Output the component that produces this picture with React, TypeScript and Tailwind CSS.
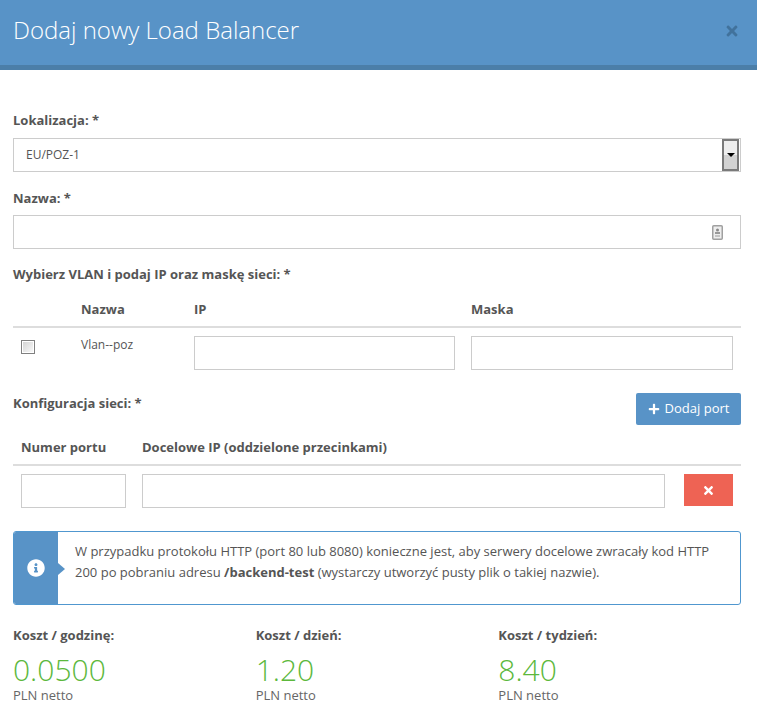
import { FaInfoCircle, FaPlus, FaTimes } from "react-icons/fa";

const font = { fontFamily: '"Open Sans", sans-serif' };

const inputClass = "h-[34px] border border-[#cccccc] bg-white";

const Label = ({ children }: { children: React.ReactNode }) => (
  <div className="text-[13px] leading-[18px] font-bold text-[#555555]">{children}</div>
);

const Cost = ({ label, value }: { label: string; value: string }) => (
  <div className="w-[243px]">
    <Label>{label}</Label>
    <div className="mt-[11px] text-[30px] leading-[30px] font-light text-[#5cb83c]">{value}</div>
    <div className="mt-[2px] text-[13px] leading-[16px] text-[#666666]">PLN netto</div>
  </div>
);

export default function App() {
  return (
    <div className="h-[715px] w-[757px] overflow-hidden bg-white" style={font}>
      <div className="flex h-[70px] items-center justify-between border-b-[5px] border-[#4b7ea8] bg-[#5893c7] pr-[18px] pb-[5px] pl-[13px]">
        <h1 className="text-[24px] font-light text-white">Dodaj nowy Load Balancer</h1>
        <FaTimes className="mt-[2px] h-[16px] w-[14px] text-[#41729c]" />
      </div>

      <div className="px-[13px] pt-[41px]">
        <Label>Lokalizacja: *</Label>
        <div className={`${inputClass} mt-[9px] flex w-[728px] items-center justify-between pr-[1px] pl-[12px]`}>
          <span className="text-[12px] text-[#555555]">EU/POZ-1</span>
          <div className="flex h-[32px] w-[17px] items-center justify-center border-2 border-[#7a7a7a] bg-[linear-gradient(#eeeeee_50%,#d2d2d2_50%)]">
            <div className="h-0 w-0 border-x-[4px] border-t-[4px] border-x-transparent border-t-black" />
          </div>
        </div>

        <div className="mt-[17px]">
          <Label>Nazwa: *</Label>
        </div>
        <div className={`${inputClass} mt-[8px] flex w-[728px] items-center justify-end pr-[17px]`}>
          <svg width="11" height="15" viewBox="0 0 11 15">
            <rect x="0.75" y="0.75" width="9.5" height="13.5" rx="1" fill="#eeeeee" stroke="#a0a0a0" strokeWidth="1.5" />
            <circle cx="5.5" cy="5" r="1.5" fill="#888888" />
            <rect x="3" y="7" width="5" height="2" fill="#999999" />
            <rect x="3" y="10" width="5" height="2" fill="#c4c4c4" />
          </svg>
        </div>

        <div className="mt-[16px]">
          <Label>Wybierz VLAN i podaj IP oraz maskę sieci: *</Label>
        </div>
        <div className="mt-[17px] flex h-[28px] w-[728px] border-b-2 border-[#dddddd]">
          <div className="w-[68px]" />
          <div className="w-[113px]">
            <Label>Nazwa</Label>
          </div>
          <div className="w-[277px]">
            <Label>IP</Label>
          </div>
          <Label>Maska</Label>
        </div>
        <div className="flex w-[728px] pt-[8px]">
          <div className="w-[68px] pt-[4px] pl-[8px]">
            <div className="h-[14px] w-[14px] border border-[#808080] bg-white p-[1px]">
              <div className="h-full w-full bg-gradient-to-br from-[#d4d4d4] to-[#f8f8f8]" />
            </div>
          </div>
          <div className="w-[113px] text-[12px] leading-[18px] text-[#555555]">Vlan--poz</div>
          <div className={`${inputClass} w-[261px]`} />
          <div className="w-[16px]" />
          <div className={`${inputClass} w-[262px]`} />
        </div>

        <div className="mt-[23px] flex w-[728px] items-start justify-between">
          <div className="pt-[1px]">
            <Label>Konfiguracja sieci: *</Label>
          </div>
          <button className="flex h-[32px] w-[105px] items-center justify-center gap-[5px] rounded-[2px] bg-[#5893c7] text-[13px] text-white">
            <FaPlus className="h-[12px] w-[12px]" />
            Dodaj port
          </button>
        </div>

        <div className="mt-[13px] flex h-[28px] w-[728px] border-b-2 border-[#dddddd]">
          <div className="w-[129px] pl-[8px]">
            <Label>Numer portu</Label>
          </div>
          <Label>Docelowe IP (oddzielone przecinkami)</Label>
        </div>
        <div className="flex w-[728px] pt-[8px]">
          <div className="w-[8px]" />
          <div className={`${inputClass} w-[105px]`} />
          <div className="w-[16px]" />
          <div className={`${inputClass} w-[523px]`} />
          <div className="w-[19px]" />
          <div className="flex h-[32px] w-[49px] items-center justify-center bg-[#ee6354]">
            <FaTimes className="h-[13px] w-[11px] text-white" />
          </div>
        </div>

        <div className="mt-[23px] flex h-[74px] w-[728px] rounded-[3px] border border-[#5097cf]">
          <div className="relative flex w-[44px] items-center justify-center rounded-l-[2px] bg-[#5893c7]">
            <FaInfoCircle className="h-[18px] w-[18px] text-white" />
            <div className="absolute top-[31px] -right-[7px] h-0 w-0 border-y-[6px] border-l-[7px] border-y-transparent border-l-[#5893c7]" />
          </div>
          <div className="pt-[9px] pl-[17px] text-[13px] leading-[21px] text-[#555555]">
            W przypadku protokołu HTTP (port 80 lub 8080) konieczne jest, aby serwery docelowe zwracały kod HTTP
            <br />
            200 po pobraniu adresu <b>/backend-test</b> (wystarczy utworzyć pusty plik o takiej nazwie).
          </div>
        </div>

        <div className="mt-[21px] flex w-[728px]">
          <Cost label="Koszt / godzinę:" value="0.0500" />
          <Cost label="Koszt / dzień:" value="1.20" />
          <Cost label="Koszt / tydzień:" value="8.40" />
        </div>
      </div>
    </div>
  );
}
